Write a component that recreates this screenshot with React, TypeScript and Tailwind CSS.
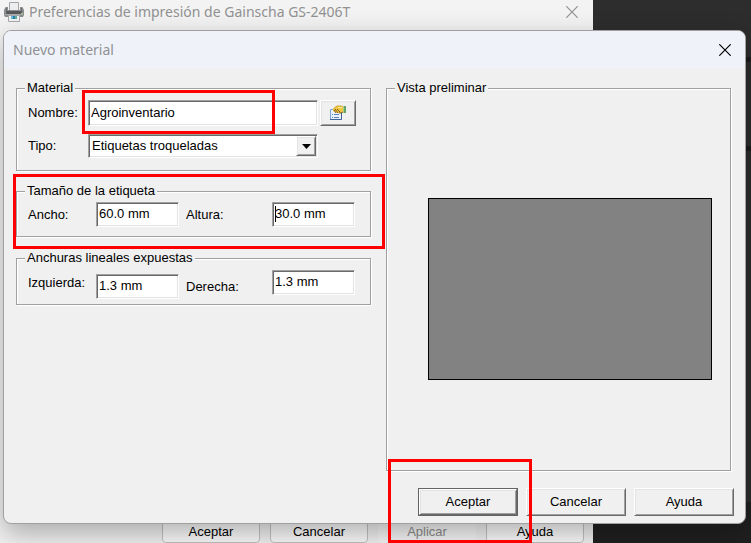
import React from 'react';

interface MeasureInputProps {
  id: string;
  value: string;
  caret?: boolean;
}

const PrinterIcon: React.FC = () => (
  <svg viewBox="0 0 20 20" className="h-5 w-5 shrink-0" aria-hidden="true">
    <path d="M5.500 0.500h9v8h-9z" fill="#eceeef" stroke="#a3a5a6" />
    <path d="M1.500 5h2.500v3h12V5h2.500L20 8v5l-1 2H1l-1-2V8z" fill="#8b8d8e" />
    <path d="M2 6h1v3h14V6h1v6H2z" fill="#6a6c6d" />
    <path d="M2.500 9h15v3h-15z" fill="#565859" />
    <path d="M1 12h18v1H1z" fill="#a9abac" />
    <path d="M17 11h2v1h-2z" fill="#9ad07d" />
    <path d="M4.500 13.500h11v6h-11z" fill="#f1f4f5" stroke="#a6a8a9" />
    <path d="M7 14h2v3H7z" fill="#67b7d6" />
    <path d="M9 14h2v3H9z" fill="#2a7fae" />
    <path d="M11 14h2v3h-2z" fill="#64b09a" />
  </svg>
);

const PropertiesIcon: React.FC = () => (
  <svg viewBox="0 0 16 16" className="h-4 w-4" aria-hidden="true">
    <path d="M0.500 4.500h11v10h-11z" fill="#e9f1fc" stroke="#7fa3d3" />
    <path d="M0 14.500h11.500V7" fill="none" stroke="#3f639b" />
    <path d="M2 9.500h1M4 9.500h5M2 12.500h1M4 12.500h5" stroke="#5b82bd" />
    <path d="M13 1h3v7h-3z" fill="#62a565" />
    <path d="M13 1h1v7h-1z" fill="#a9cf8c" />
    <path d="M3 4l4-3h4l2 1v5l-2 1H9L7 8 5 7 3 6z" fill="#f3c742" />
    <path d="M3.500 3.500L7 1h4l2 1" fill="none" stroke="#cfa433" />
    <path d="M7 4l3 3M5 4l3 4M4 5l2 3M13 7l-2 1H9" fill="none" stroke="#7b5c1c" />
    <path d="M8 2.500h4" stroke="#ffe99a" />
  </svg>
);

const CloseIcon: React.FC = () => (
  <svg viewBox="0 0 12 12" className="h-3 w-3" aria-hidden="true">
    <path d="M0.300 0.300l11.400 11.400M11.700 0.300L0.300 11.700" stroke="currentColor" strokeWidth="1.200" />
  </svg>
);

const sunken =
  'border border-t-[#a0a0a0] border-l-[#a0a0a0] border-r-white border-b-white bg-white shadow-[inset_1px_1px_0_#696969,inset_-1px_-1px_0_#e3e3e3] outline-none';
const raised =
  'border border-t-white border-l-white border-r-[#696969] border-b-[#696969] bg-[#f0f0f0] shadow-[inset_1px_1px_0_#e3e3e3,inset_-1px_-1px_0_#a0a0a0]';
const group =
  'min-w-0 border border-[#a0a0a0] shadow-[1px_1px_0_#fff,inset_1px_1px_0_#fff]';
const groupTitle = 'ml-2 bg-[#f0f0f0] px-0.5 leading-4';
const flatButton = 'h-6 w-[98px] rounded border border-[#c4c4c4] bg-[#fdfdfd] pt-0.5';

const MeasureInput: React.FC<MeasureInputProps> = ({ id, value, caret }) => (
  <div className="relative h-[25px] w-[83px]">
    <input id={id} type="text" defaultValue={value} className={`${sunken} h-full w-full pb-0.5 pl-0.5`} />
    {caret && <span className="absolute top-1 left-[3px] h-4 w-px bg-black" />}
  </div>
);

const PreferencesWindow: React.FC = () => (
  <section className="absolute inset-y-0 right-[158px] left-0 flex flex-col justify-between bg-[#f3f3f3]">
    <header className="flex items-center justify-between pr-[15px] pl-1 text-[#919191]">
      <div className="flex items-center gap-[5px]">
        <PrinterIcon />
        <h2 className="font-['Noto_Sans',sans-serif] text-[14px] leading-[23px]">
          Preferencias de impresión de Gainscha GS-2406T
        </h2>
      </div>
      <button type="button" aria-label="Cerrar preferencias">
        <CloseIcon />
      </button>
    </header>
    <footer className="flex justify-end gap-2.5 pr-[9px]">
      <button type="button" className={flatButton}>Aceptar</button>
      <button type="button" className={flatButton}>Cancelar</button>
      <button type="button" disabled className="h-6 w-[98px] rounded bg-[#f8f8f8] pt-0.5 text-[#8c8c8c]">Aplicar</button>
      <button type="button" className={flatButton}>Ayuda</button>
    </footer>
  </section>
);

const MaterialDialog: React.FC = () => (
  <section
    role="dialog"
    aria-labelledby="dialog-title"
    className="absolute top-[30px] right-[5px] bottom-[19px] left-[3px] flex flex-col overflow-hidden rounded-lg border border-[#a0a0a0] bg-[#f0f0f0] shadow-[0_10px_28px_rgba(0,0,0,0.3)]"
  >
    <header className="flex h-[37px] shrink-0 items-center justify-between bg-[#eff3f9] pr-[14px] pl-[9px]">
      <h1 id="dialog-title" className="font-['Noto_Sans',sans-serif] text-[14px] text-[#8f9194]">
        Nuevo material
      </h1>
      <button type="button" aria-label="Cerrar" className="text-black">
        <CloseIcon />
      </button>
    </header>

    <div className="flex flex-1 gap-[15px] pt-3 pr-[14px] pl-3">
      <form className="w-[355px] shrink-0">
        <fieldset className={group}>
          <legend className={groupTitle}>Material</legend>
          <div className="flex items-center pt-1 pl-[11px]">
            <label htmlFor="nombre" className="w-[60px]">Nombre:</label>
            <input
              id="nombre"
              type="text"
              defaultValue="Agroinventario"
              className={`${sunken} h-[26px] w-[230px] pb-0.5 pl-0.5`}
            />
            <button type="button" aria-label="Propiedades" className={`${raised} ml-0.5 flex h-[26px] w-9 items-center justify-center`}>
              <PropertiesIcon />
            </button>
          </div>
          <div className="flex items-center pt-2 pb-3 pl-[11px]">
            <label htmlFor="tipo" className="w-[60px]">Tipo:</label>
            <div className="relative">
              <select id="tipo" className={`${sunken} block h-6 w-[230px] appearance-none pl-[3px]`}>
                <option>Etiquetas troqueladas</option>
              </select>
              <span className={`${raised} pointer-events-none absolute inset-y-0.5 right-0.5 flex w-5 items-center justify-center`}>
                <svg viewBox="0 0 9 5" className="h-[5px] w-[9px]" aria-hidden="true">
                  <path d="M0 0h9L4.500 5z" fill="#000" />
                </svg>
              </span>
            </div>
          </div>
        </fieldset>

        <fieldset className={`${group} mt-3`}>
          <legend className={groupTitle}>Tamaño de la etiqueta</legend>
          <div className="flex items-center pt-[3px] pb-[9px] pl-[11px]">
            <label htmlFor="ancho" className="w-[68px]">Ancho:</label>
            <MeasureInput id="ancho" value="60.0 mm" />
            <label htmlFor="altura" className="w-[93px] pl-[7px]">Altura:</label>
            <MeasureInput id="altura" value="30.0 mm" caret />
          </div>
        </fieldset>

        <fieldset className={`${group} mt-[13px]`}>
          <legend className={groupTitle}>Anchuras lineales expuestas</legend>
          <div className="flex h-[38px] pt-1 pb-[5px] pl-[11px]">
            <label htmlFor="izquierda" className="w-[68px] self-start leading-[25px]">Izquierda:</label>
            <div className="self-end">
              <MeasureInput id="izquierda" value="1.3 mm" />
            </div>
            <label htmlFor="derecha" className="w-[93px] self-end pl-[7px] leading-[25px]">Derecha:</label>
            <div className="self-start">
              <MeasureInput id="derecha" value="1.3 mm" />
            </div>
          </div>
        </fieldset>
      </form>

      <fieldset className={`${group} flex-1`}>
        <legend className={groupTitle}>Vista preliminar</legend>
        <div className="flex h-full items-center pt-[11px] pr-[18px] pl-[41px]">
          <div className="h-[182px] w-full border border-black bg-[#828282]" />
        </div>
      </fieldset>
    </div>

    <footer className="flex justify-end gap-2 pt-[17px] pr-[11px] pb-[7px]">
      <div className="w-[100px] border border-[#646464]">
        <button type="button" className={`${raised} h-[26px] w-full`}>Aceptar</button>
      </div>
      <button type="button" className={`${raised} h-7 w-[100px]`}>Cancelar</button>
      <button type="button" className={`${raised} h-7 w-[100px]`}>Ayuda</button>
    </footer>
  </section>
);

const App: React.FC = () => {
  return (
    <main className="relative flex min-h-screen flex-col overflow-hidden bg-[#2d2d2d] font-['Liberation_Sans',Arial,sans-serif] text-[13px] text-black">
      <div className="mt-[57px] h-[5px] bg-[#1c1c1c]" />
      <div className="mt-[84px] h-[5px] bg-[#1c1c1c]" />
      <div className="mt-[351px] flex-1 bg-[#202020]" />

      <PreferencesWindow />
      <MaterialDialog />

      {/* highlights over the fields to fill in */}
      <div className="pointer-events-none absolute top-[90px] left-[82px] h-11 w-[193px] border-3 border-[#ff0000]" />
      <div className="pointer-events-none absolute top-[174px] left-[13px] h-[75px] w-[372px] border-3 border-[#ff0000]" />
      <div className="pointer-events-none absolute top-[459px] left-[388px] h-[84px] w-36 border-3 border-[#ff0000]" />
    </main>
  );
};

export default App;
